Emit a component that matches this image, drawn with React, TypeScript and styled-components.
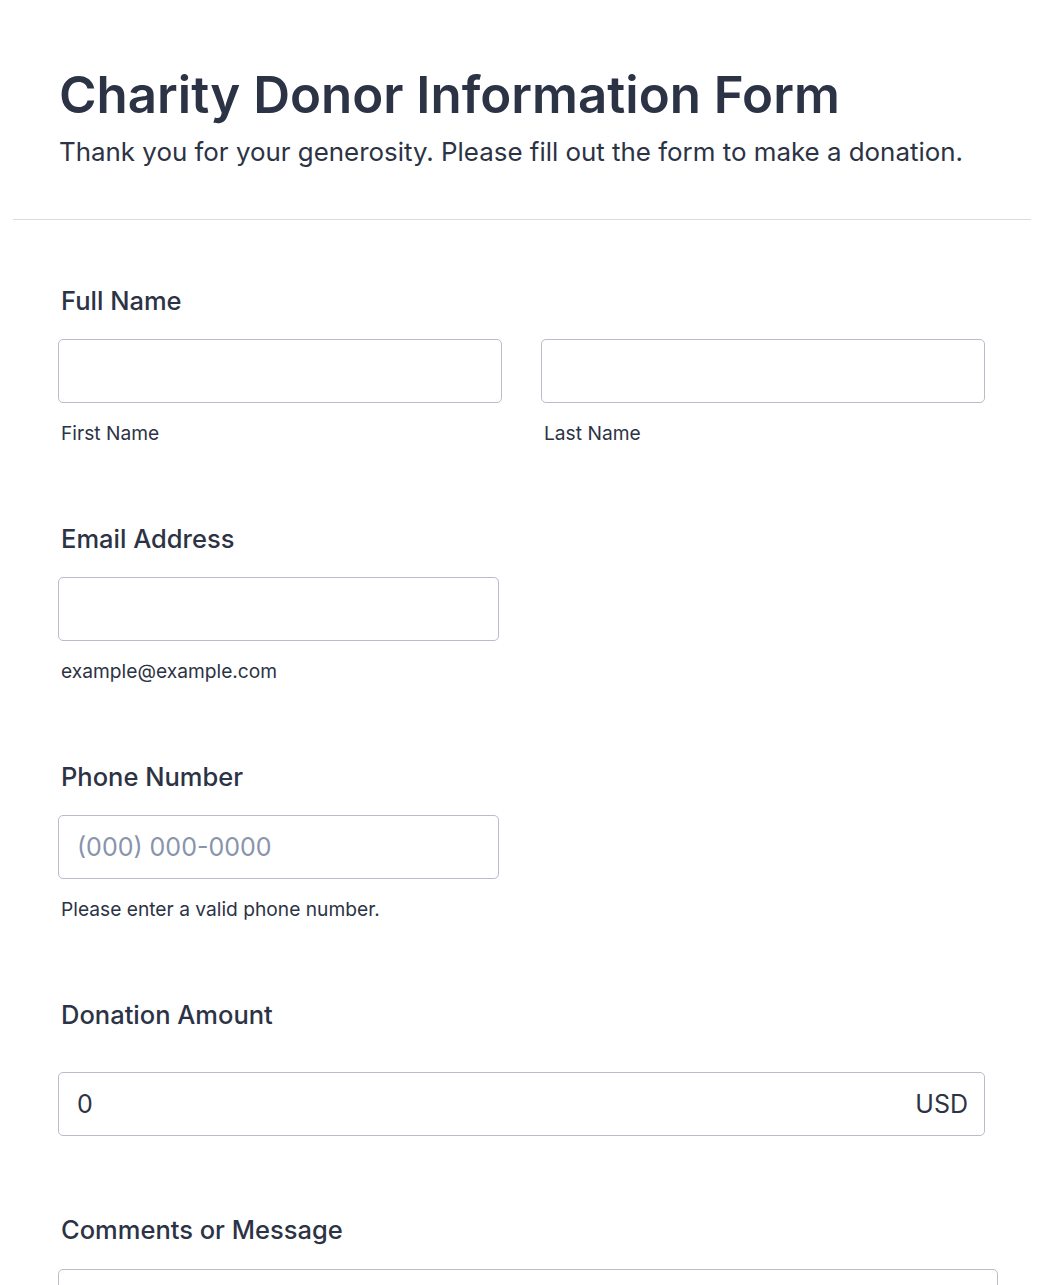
import React from 'react';
import styled, { createGlobalStyle } from 'styled-components';

const GlobalStyle = createGlobalStyle`
  html, body {
    margin: 0;
    padding: 0;
    background: #ffffff;
  }
  body {
    font-family: Inter, "Noto Sans", sans-serif;
    color: #2c3345;
  }
  * {
    box-sizing: border-box;
  }
`;

const Page = styled.div`
  padding: 0 13px;
`;

const Header = styled.header`
  padding: 65px 46px 52px;
  border-bottom: 1px solid #d8dbe2;
`;

const Title = styled.h1`
  margin: 0;
  font-size: 51px;
  line-height: 60px;
  font-weight: 600;
  color: #2c3345;
`;

const Subtitle = styled.p`
  margin: 12px 0 0;
  font-size: 25.9px;
  line-height: 30px;
  font-weight: 400;
  color: #2c3345;
`;

const FormBody = styled.form`
  display: flex;
  flex-direction: column;
  gap: 79px;
  padding: 66px 45px 0;
`;

const Field = styled.div`
  display: flex;
  flex-direction: column;
`;

const Label = styled.label<{ $gap?: number }>`
  display: block;
  font-size: 25.5px;
  line-height: 30px;
  font-weight: 500;
  color: #2c3345;
  padding-left: 3px;
  margin-bottom: ${p => p.$gap ?? 23}px;
`;

const Row = styled.div`
  display: flex;
  gap: 39px;
`;

const Column = styled.div<{ $width?: number }>`
  display: flex;
  flex-direction: column;
  width: ${p => (p.$width ? `${p.$width}px` : '100%')};
`;

const Input = styled.input`
  width: 100%;
  height: 64px;
  padding: 0 16px 0 18px;
  border: 1px solid #b8bdc9;
  border-radius: 5px;
  background: #ffffff;
  font-family: inherit;
  font-size: 25px;
  color: #2c3345;
  outline: none;

  &::placeholder {
    color: #8894ab;
  }
`;

const Sublabel = styled.span`
  display: block;
  margin-top: 18px;
  padding-left: 3px;
  font-size: 19.2px;
  line-height: 24px;
  color: #2c3345;
`;

const AmountBox = styled.div`
  display: flex;
  align-items: center;
  width: 927px;
  height: 64px;
  padding: 0 16px 0 18px;
  border: 1px solid #b8bdc9;
  border-radius: 5px;
`;

const AmountInput = styled.input`
  flex: 1;
  border: none;
  outline: none;
  padding: 0;
  font-family: inherit;
  font-size: 25px;
  color: #2c3345;
  background: transparent;
`;

const Currency = styled.span`
  font-size: 25px;
  color: #2c3345;
`;

const TextArea = styled.textarea`
  width: 940px;
  height: 160px;
  padding: 14px 18px;
  border: 1px solid #b8bdc9;
  border-radius: 5px;
  font-family: inherit;
  font-size: 25px;
  color: #2c3345;
  resize: none;
  outline: none;
`;

export default function App() {
  return (
    <>
      <GlobalStyle />
      <Page>
        <Header>
          <Title>Charity Donor Information Form</Title>
          <Subtitle>Thank you for your generosity. Please fill out the form to make a donation.</Subtitle>
        </Header>
        <FormBody onSubmit={e => e.preventDefault()}>
          <Field>
            <Label>Full Name</Label>
            <Row>
              <Column $width={444}>
                <Input type="text" aria-label="First Name" />
                <Sublabel>First Name</Sublabel>
              </Column>
              <Column $width={444}>
                <Input type="text" aria-label="Last Name" />
                <Sublabel>Last Name</Sublabel>
              </Column>
            </Row>
          </Field>

          <Field>
            <Label>Email Address</Label>
            <Column $width={441}>
              <Input type="email" />
              <Sublabel>example@example.com</Sublabel>
            </Column>
          </Field>

          <Field>
            <Label>Phone Number</Label>
            <Column $width={441}>
              <Input type="tel" placeholder="(000) 000-0000" />
              <Sublabel>Please enter a valid phone number.</Sublabel>
            </Column>
          </Field>

          <Field>
            <Label $gap={42}>Donation Amount</Label>
            <AmountBox>
              <AmountInput type="text" defaultValue="0" />
              <Currency>USD</Currency>
            </AmountBox>
          </Field>

          <Field>
            <Label $gap={24}>Comments or Message</Label>
            <TextArea />
          </Field>
        </FormBody>
      </Page>
    </>
  );
}
